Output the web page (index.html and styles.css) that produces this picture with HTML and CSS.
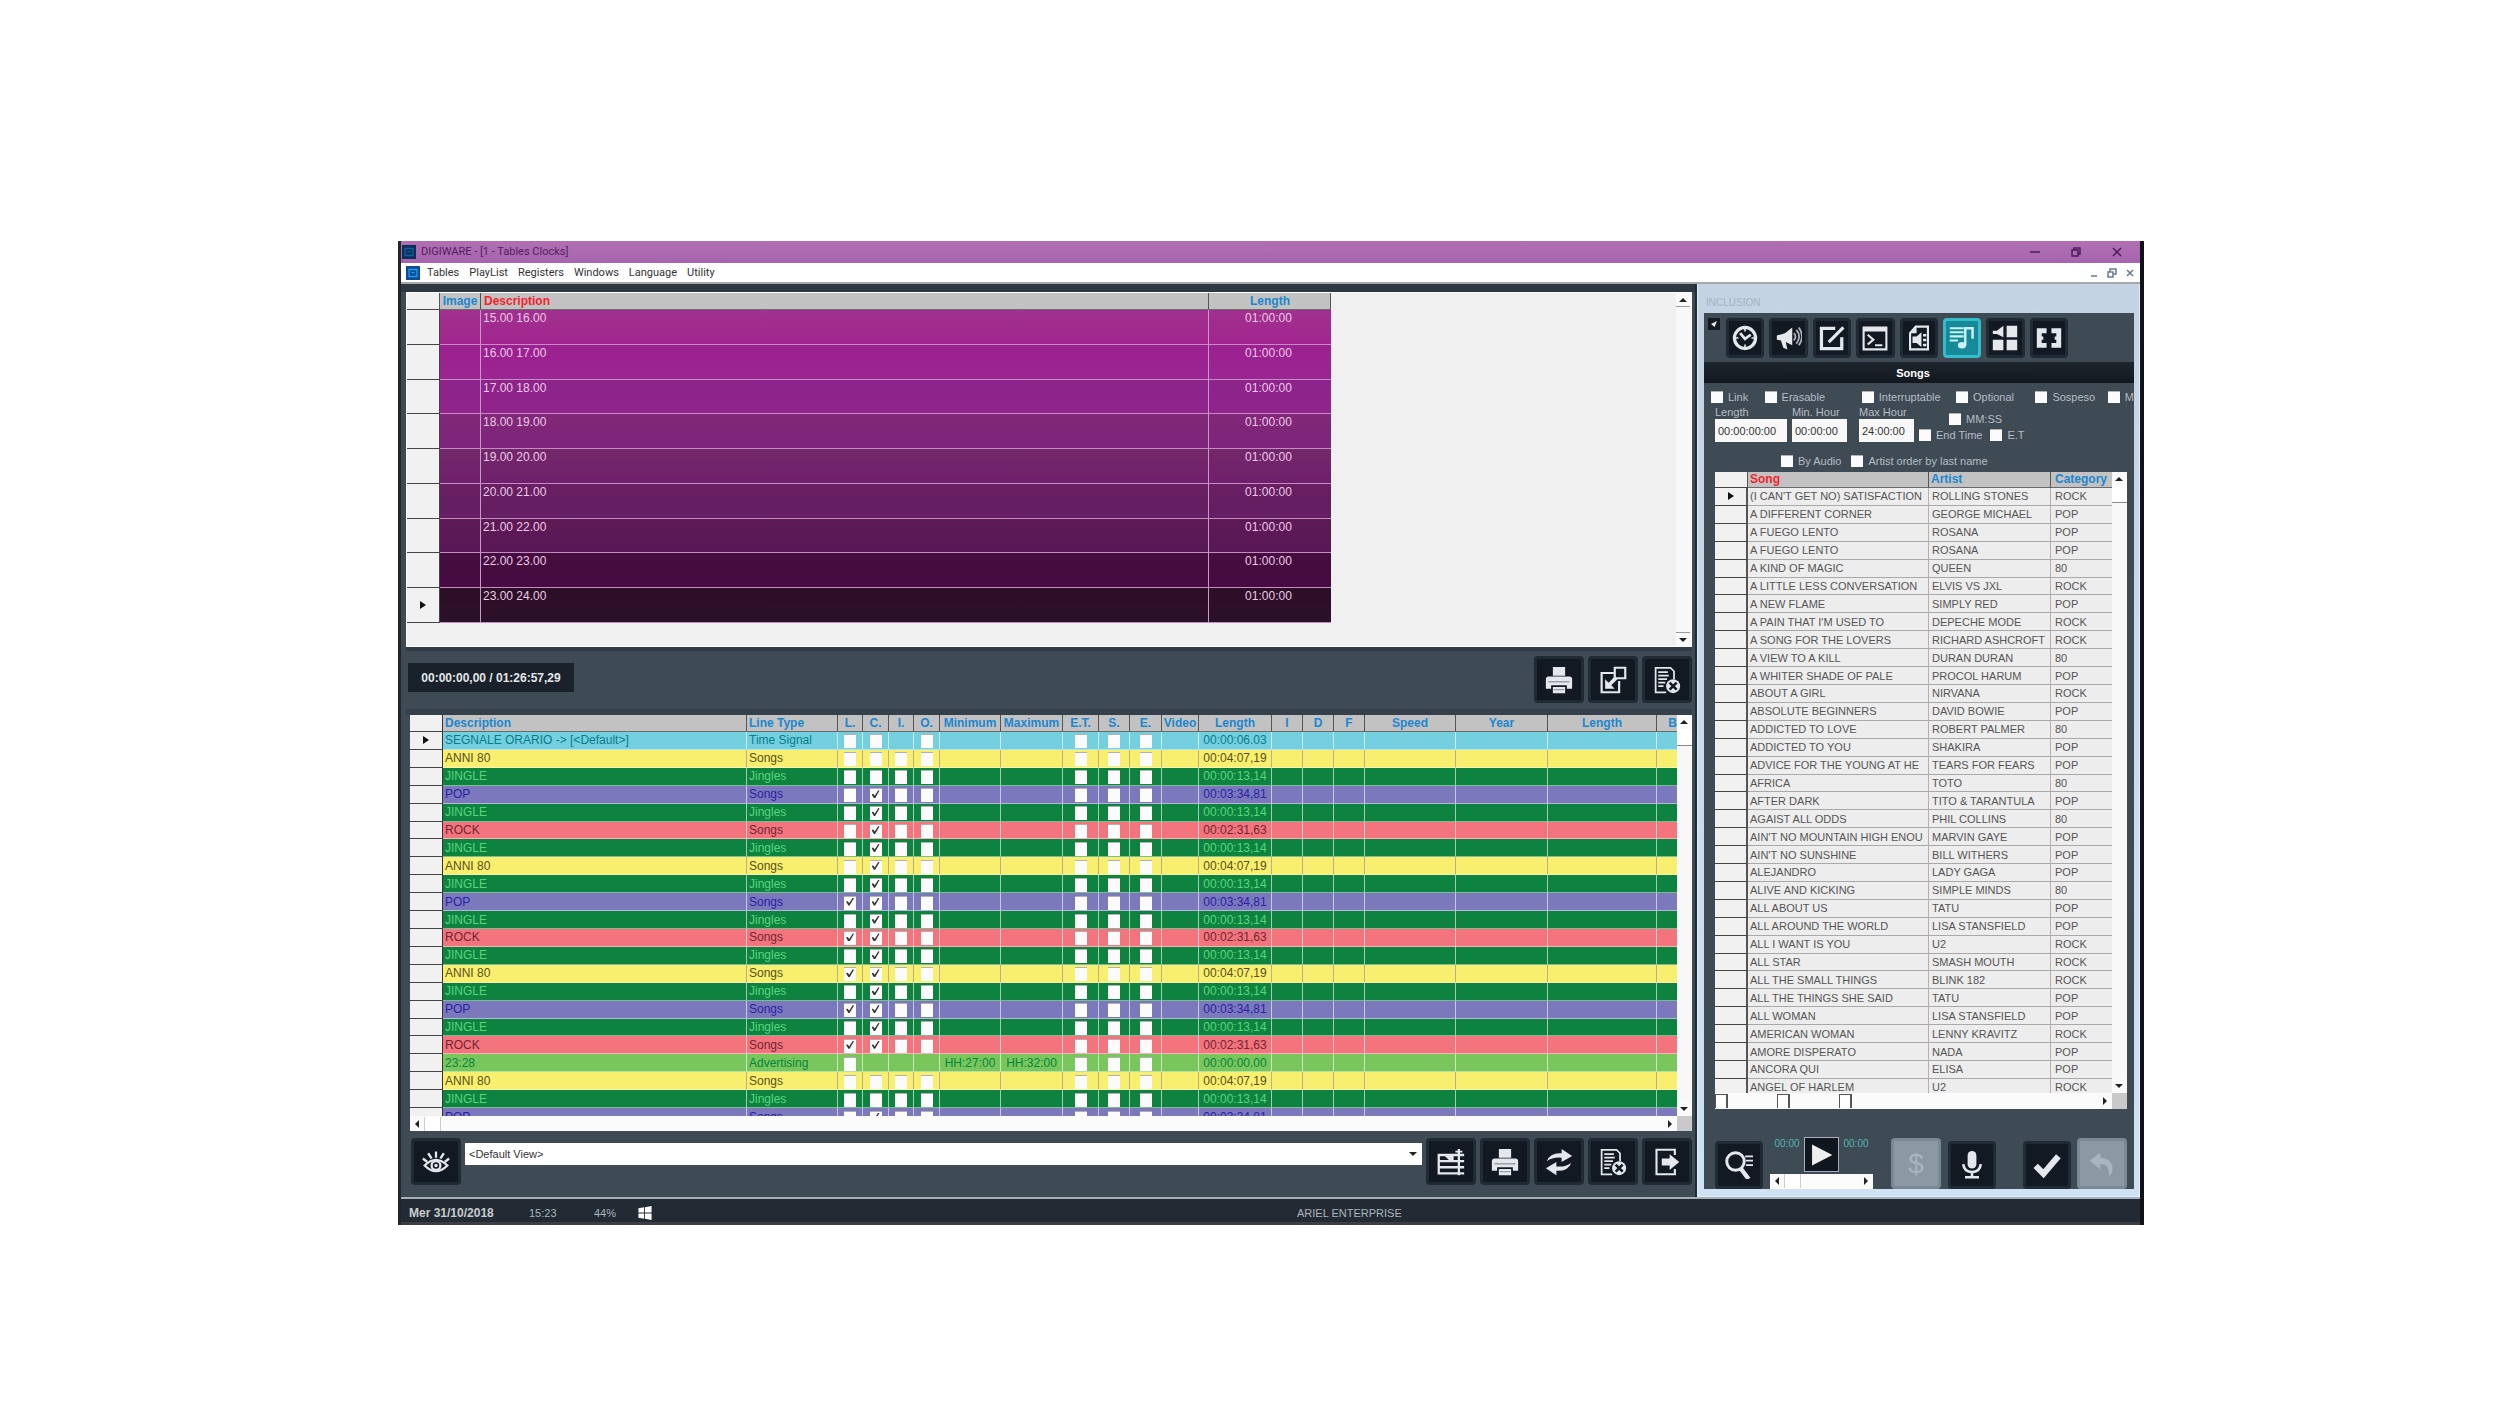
FILE: index.html
```html
<!DOCTYPE html>
<html lang="en">
<head>
<meta charset="utf-8">
<title>DIGIWARE - [1 - Tables Clocks]</title>
<link rel="stylesheet" href="styles.css">
</head>
<body>
<svg class="sprite" aria-hidden="true">
  <symbol id="i-print" viewBox="0 0 32 32"><path fill="currentColor" d="M9 1h14v10H9zM4 12h24q3 0 3 3v11h-6v-4H7v4H1V15q0-3 3-3zM9 24h14v7H9z"/><path stroke="#98a0a8" stroke-width="1.5" d="M4 18h24M10 27h12"/></symbol>
  <symbol id="i-expand" viewBox="0 0 32 32"><g fill="none" stroke="currentColor" stroke-width="2.5"><path d="M17 8H3v22h20V17"/><path d="M18 2h12v12H18z"/></g><path fill="currentColor" d="M7 26V15l4 4 7-7 3 3-7 7 4 4z"/></symbol>
  <symbol id="i-docx" viewBox="0 0 32 32"><path fill="none" stroke="currentColor" stroke-width="2" d="M15 30H3V2h17l4 4v9"/><path stroke="currentColor" stroke-width="1.8" d="M6 7h11M6 11h12M6 15h10M6 19h8M6 23h6"/><circle cx="23" cy="23" r="8" fill="currentColor"/><path stroke="#141b24" stroke-width="3" d="m19 19 8 8m0-8-8 8"/></symbol>
  <symbol id="i-eye" viewBox="0 0 32 32"><g fill="none" stroke="currentColor" stroke-width="2.6"><path d="M3 20q13-13 26 0-13 13-26 0z"/><circle cx="16" cy="20" r="5"/><path d="m1 12 5 4M7 6l4 6M16 4v7M25 6l-4 6M31 12l-5 4"/></g><circle cx="16" cy="20" r="2" fill="currentColor"/></symbol>
  <symbol id="i-rows" viewBox="0 0 32 32"><path fill="none" stroke="currentColor" stroke-width="2.6" d="M31 8H2v21h29M2 15h29M2 22h29M25 1v30"/><path fill="currentColor" d="m9 9 6 6h4V9zM21 3h8v2h-8z"/></symbol>
  <symbol id="i-sync" viewBox="0 0 32 32"><path fill="currentColor" d="M2 15Q6 5 19 6V1l12 8-12 7v-5Q9 10 2 15zM30 17q-4 10-17 9v5L1 23l12-7v5q10 1 17-4z"/></symbol>
  <symbol id="i-exit" viewBox="0 0 32 32"><path fill="none" stroke="currentColor" stroke-width="2.4" d="M25 8V2H4v28h21v-6"/><path fill="currentColor" d="M10 12h9V7l11 9-11 9v-5h-9z"/></symbol>
  <symbol id="i-clock" viewBox="0 0 32 32"><circle cx="16" cy="16" r="13" fill="none" stroke="currentColor" stroke-width="4"/><path fill="none" stroke="currentColor" stroke-width="3.4" d="m10 10 6 7 7-5"/><path stroke="currentColor" stroke-width="2" d="M16 4v4M16 24v4M4 16h4M24 16h4"/></symbol>
  <symbol id="i-horn" viewBox="0 0 32 32"><path fill="currentColor" d="M1 13 11 10 20 3v22l-8-4 2 9-5-2-3-9-5-1z"/><path fill="none" stroke="currentColor" stroke-width="2.2" d="M22 10q4 4 0 9M25 6q7 8 0 17M28 3q8 11 0 22" opacity=".75"/></symbol>
  <symbol id="i-edit" viewBox="0 0 32 32"><path fill="none" stroke="currentColor" stroke-width="4" d="M20 4H3v25h25V15"/><path stroke="currentColor" stroke-width="4" d="M12 21 30 3"/></symbol>
  <symbol id="i-term" viewBox="0 0 32 32"><path fill="none" stroke="currentColor" stroke-width="2.6" d="M2 3h28v27H2z"/><path fill="currentColor" d="M2 3h28v5H2z"/><path fill="none" stroke="currentColor" stroke-width="2.6" d="m7 12 7 6-7 6M16 25h9"/></symbol>
  <symbol id="i-file" viewBox="0 0 32 32"><path fill="none" stroke="currentColor" stroke-width="2.6" d="M12 2h15v28H5V10z"/><path fill="currentColor" d="M5 10 13 2v8zM8 14h5l6-5v18l-6-5H8zM21 11h4v3h-4zM21 17h4v3h-4zM21 23h4v3h-4z"/></symbol>
  <symbol id="i-music" viewBox="0 0 32 32"><path stroke="currentColor" stroke-width="2.6" d="M1 4h17M1 9h17M1 14h17M1 19h10"/><path fill="none" stroke="currentColor" stroke-width="3" d="M20 25V4h9v13"/><ellipse cx="16" cy="25" rx="5" ry="4" fill="currentColor"/></symbol>
  <symbol id="i-grid" viewBox="0 0 32 32"><path fill="currentColor" d="M1 7h5l8-6v14L6 11H1zM18 1h13v14H18zM1 18h13v13H1zM18 18h13v13H18z"/></symbol>
  <symbol id="i-link" viewBox="0 0 32 32"><path fill="none" stroke="currentColor" stroke-width="6" d="M13 7H4v18h9M19 7h9v18h-9"/><path stroke="currentColor" stroke-width="4" d="M6 16h3M23 16h3"/></symbol>
  <symbol id="i-find" viewBox="0 0 32 32"><circle cx="12" cy="12" r="10" fill="none" stroke="currentColor" stroke-width="3.4"/><path stroke="currentColor" stroke-width="5" d="m18 20 9 12"/><path stroke="currentColor" stroke-width="2" d="M23 6h9M24 11h8M24 16h8"/></symbol>
  <symbol id="i-mic" viewBox="0 0 32 32"><rect x="11" y="0" width="10" height="20" rx="5" fill="currentColor"/><path fill="none" stroke="currentColor" stroke-width="3" d="M6 15q1 9 10 9t10-9M16 24v5M8 30h16"/></symbol>
  <symbol id="i-check" viewBox="0 0 32 32"><path fill="none" stroke="currentColor" stroke-width="7" d="m3 17 9 9L29 6"/></symbol>
  <symbol id="i-undo" viewBox="0 0 32 32"><path fill="currentColor" d="M2 12 14 3v6q14 0 14 13 0 5-4 8 1-14-10-14v6z"/></symbol>
  <symbol id="i-play" viewBox="0 0 32 32"><path fill="currentColor" d="M5 3l25 13L5 29z"/></symbol>
  <symbol id="i-win" viewBox="0 0 32 32"><path fill="currentColor" d="m1 5 13-2v12H1zM16 3l15-3v15H16zM1 17h13v12L1 27zM16 17h15v15l-15-3z"/></symbol>
  <symbol id="i-app" viewBox="0 0 32 32"><path fill="#0a2f5c" d="M0 0h32v32H0z"/><path fill="none" stroke="#14609a" stroke-width="3" d="M7 8h18v16H7zM12 15h8"/></symbol>
</svg>

<div class="window">
  <header class="titlebar">
    <svg class="app-icon"><use href="#i-app"/></svg>
    <h1>DIGIWARE - [1 - Tables Clocks]</h1>
    <div class="winctl">
      <button aria-label="Minimize"><svg viewBox="0 0 10 10"><path d="M0 5h10"/></svg></button>
      <button aria-label="Restore"><svg viewBox="0 0 10 10"><path d="M1 3h6v6H1zM3 3V1h6v6H7"/></svg></button>
      <button aria-label="Close"><svg viewBox="0 0 10 10"><path d="m1 1 8 8m0-8-8 8"/></svg></button>
    </div>
  </header>
  <nav class="menubar">
    <svg class="app-icon light"><use href="#i-app"/></svg>
    <a href="#tables">Tables</a><a href="#playlist">PlayList</a><a href="#registers">Registers</a><a href="#windows">Windows</a><a href="#language">Language</a><a href="#utility">Utility</a>
    <div class="childctl">
      <button aria-label="Minimize child"><svg viewBox="0 0 10 10"><path d="M2 8h6"/></svg></button>
      <button aria-label="Restore child"><svg viewBox="0 0 10 10"><path d="M1 4h5v5H1zM3 4V1h6v5H6"/></svg></button>
      <button aria-label="Close child"><svg viewBox="0 0 10 10"><path d="m2 2 6 6m0-6-6 6"/></svg></button>
    </div>
  </nav>

  <main class="workspace">
    <div class="left">
      <section class="clock-panel">
        <table class="clocks">
          <thead><tr><th class="mark"></th><th class="c-image">Image</th><th class="sorted">Description</th><th class="c-len">Length</th></tr></thead>
          <tbody id="clocks"></tbody>
        </table>
        <div class="vbar"><button class="arw up" aria-label="Scroll up"></button><button class="arw down" aria-label="Scroll down"></button></div>
      </section>

      <div class="midbar">
        <output class="counter">00:00:00,00 / 01:26:57,29</output>
        <div class="tools">
          <button class="tool" aria-label="Print"><svg><use href="#i-print"/></svg></button>
          <button class="tool" aria-label="Expand"><svg><use href="#i-expand"/></svg></button>
          <button class="tool" aria-label="Delete list"><svg><use href="#i-docx"/></svg></button>
        </div>
      </div>

      <section class="grid-panel">
        <div class="grid-view">
          <table class="lines">
            <colgroup><col class="w33"><col><col class="w91"><col class="w25"><col class="w26"><col class="w25"><col class="w26"><col class="w61"><col class="w62"><col class="w36"><col class="w31"><col class="w32"><col class="w37"><col class="w73"><col class="w31"><col class="w31"><col class="w31"><col class="w91"><col class="w92"><col class="w109"><col class="w20"></colgroup>
            <thead><tr><th class="mark"></th><th class="l">Description</th><th class="l">Line Type</th><th>L.</th><th>C.</th><th>I.</th><th>O.</th><th>Minimum</th><th>Maximum</th><th>E.T.</th><th>S.</th><th>E.</th><th>Video</th><th>Length</th><th>I</th><th>D</th><th>F</th><th>Speed</th><th>Year</th><th>Length</th><th class="cut">B</th></tr></thead>
            <tbody id="lines"></tbody>
          </table>
        </div>
        <div class="vbar"><button class="arw up" aria-label="Scroll up"></button><div class="thumb"></div><button class="arw down" aria-label="Scroll down"></button></div>
        <div class="hbar"><button class="arw left-a" aria-label="Scroll left"></button><div class="hthumb"></div><button class="arw right-a" aria-label="Scroll right"></button></div>
        <div class="corner"></div>
      </section>

      <div class="viewbar">
        <button class="tool" aria-label="Show view"><svg><use href="#i-eye"/></svg></button>
        <label class="view"><select aria-label="View"><option>&lt;Default View&gt;</option></select></label>
        <div class="tools">
          <button class="tool" aria-label="Insert row"><svg><use href="#i-rows"/></svg></button>
          <button class="tool" aria-label="Print list"><svg><use href="#i-print"/></svg></button>
          <button class="tool" aria-label="Refresh"><svg><use href="#i-sync"/></svg></button>
          <button class="tool" aria-label="Clear list"><svg><use href="#i-docx"/></svg></button>
          <button class="tool" aria-label="Exit"><svg><use href="#i-exit"/></svg></button>
        </div>
      </div>
    </div>

    <aside class="inclusion">
      <h2>INCLUSION</h2>
      <div class="inner">
        <div class="kinds">
          <button class="pin" aria-label="Pin"></button>
          <div class="kind-list">
            <button class="tool" aria-label="Time signal"><svg><use href="#i-clock"/></svg></button>
            <button class="tool" aria-label="Advertising"><svg><use href="#i-horn"/></svg></button>
            <button class="tool" aria-label="Notes"><svg><use href="#i-edit"/></svg></button>
            <button class="tool" aria-label="Command"><svg><use href="#i-term"/></svg></button>
            <button class="tool" aria-label="Audio file"><svg><use href="#i-file"/></svg></button>
            <button class="tool active" aria-label="Songs"><svg><use href="#i-music"/></svg></button>
            <button class="tool" aria-label="Jingles"><svg><use href="#i-grid"/></svg></button>
            <button class="tool" aria-label="Linked"><svg><use href="#i-link"/></svg></button>
          </div>
        </div>
        <h3>Songs</h3>
        <form class="opts">
          <div class="flags">
            <label><input type="checkbox">Link</label><label><input type="checkbox">Erasable</label><label><input type="checkbox">Interruptable</label><label><input type="checkbox">Optional</label><label><input type="checkbox">Sospeso</label><label><input type="checkbox">M</label>
          </div>
          <div class="times">
            <label class="f-len">Length<input type="text" value="00:00:00:00"></label>
            <label class="f-min">Min. Hour<input type="text" value="00:00:00"></label>
            <label class="f-max">Max Hour<input type="text" value="24:00:00"></label>
            <div class="ends">
              <label class="mmss"><input type="checkbox">MM:SS</label>
              <div class="pair"><label><input type="checkbox">End Time</label><label><input type="checkbox">E.T</label></div>
            </div>
          </div>
          <div class="sorts"><label><input type="checkbox">By Audio</label><label><input type="checkbox">Artist order by last name</label></div>
        </form>
        <section class="song-panel">
          <div class="song-view">
            <table class="songs">
              <thead><tr><th class="mark"></th><th class="c-song sorted">Song</th><th class="c-artist">Artist</th><th>Category</th></tr></thead>
              <tbody id="songs"></tbody>
            </table>
          </div>
          <div class="vbar"><button class="arw up" aria-label="Scroll up"></button><div class="thumb"></div><button class="arw down" aria-label="Scroll down"></button></div>
          <div class="hbar ticks"><i></i><i></i><i></i><button class="arw right-a" aria-label="Scroll right"></button></div>
          <div class="corner"></div>
        </section>
        <div class="player">
          <button class="tool" aria-label="Search"><svg><use href="#i-find"/></svg></button>
          <div class="deck">
            <span>00:00</span><button class="play" aria-label="Play"><svg><use href="#i-play"/></svg></button><span>00:00</span>
            <div class="seek"><button class="arw left-a" aria-label="Back"></button><div class="hthumb"></div><button class="arw right-a" aria-label="Forward"></button></div>
          </div>
          <button class="tool off dollar" disabled>$</button>
          <button class="tool" aria-label="Record"><svg><use href="#i-mic"/></svg></button>
          <button class="tool ok" aria-label="Confirm"><svg><use href="#i-check"/></svg></button>
          <button class="tool off" disabled aria-label="Undo"><svg><use href="#i-undo"/></svg></button>
        </div>
      </div>
    </aside>
  </main>

  <footer class="status">
    <b>Mer 31/10/2018</b><span>15:23</span><span>44%</span><svg><use href="#i-win"/></svg><span>ARIEL ENTERPRISE</span>
  </footer>
</div>
<script src="app.js"></script>
</body>
</html>
```
FILE: styles.css
```css
* { box-sizing: border-box; }
body {
  margin: 0;
  padding: 241px 356px 180px 398px;
  background: #fff;
  font: 11px/16px "Liberation Sans", Arial, sans-serif;
}
h1, h2, h3 { margin: 0; font-size: 11px; font-weight: 400; }
button { margin: 0; padding: 0; border: 0; background: none; font: inherit; }
table { border-collapse: separate; border-spacing: 0; table-layout: fixed; width: 100%; }
th, td { padding: 0; overflow: hidden; white-space: nowrap; line-height: 16px; }
.sprite { position: absolute; width: 0; height: 0; }

.window { border-left: 3px solid #23272d; border-right: 4px solid #0f1216; background: #3e4a54; }

/* title and menus */
.titlebar { display: flex; align-items: center; height: 22px; padding: 0 18px 0 1px; background: linear-gradient(#b26fb2, #a565ad); color: #54205f; }
.titlebar h1 { font-family: Roboto, sans-serif; margin-left: 5px; }
.app-icon { width: 14px; height: 14px; }
.app-icon.light { filter: brightness(1.6); margin-right: 7px; }
.winctl, .childctl { display: flex; margin-left: auto; }
.winctl { gap: 31px; }
.winctl svg, .childctl svg { display: block; width: 10px; height: 10px; fill: none; stroke: #4c1c58; stroke-width: 1.5; }
.childctl { gap: 8px; }
.childctl svg { stroke: #6a7a8c; }
.menubar { display: flex; align-items: center; height: 21px; padding: 0 5px; background: #fff; border-bottom: 2px solid #a5a9ab; font-family: Roboto, sans-serif; }
.menubar a { color: #333; text-decoration: none; margin-right: 10px; }

.workspace { display: grid; grid-template-columns: minmax(0, 1fr) 443px; border-bottom: 2px solid #a7b0b8; background: #2b3740; }
.left { padding: 8px 3px 0 5px; background: #3e4a54; border-right: 2px solid #222a32; border-top: 0; box-shadow: inset 0 8px #2c3943; }

/* tables */
th { height: 17px; background: #c2c2c2; color: #1b87cf; font-size: 12px; font-weight: 700; border-right: 1px solid #555; border-bottom: 1px solid #6b6b6b; }
th.sorted { color: #f5222d; text-align: left; padding-left: 3px; }
th.l { text-align: left; padding-left: 2px; }
.mark { background: #f1f1f1; border-right: 1px solid #555; border-bottom: 1px solid #444; text-align: center; }
.mark.now::after { content: ""; display: inline-block; border-left: 6px solid #111; border-top: 4px solid transparent; border-bottom: 4px solid transparent; }
.arw { display: grid; place-items: center; width: 14px; height: 14px; background: #fafafa; flex: none; }
.arw::after { content: ""; border: 4px solid transparent; }
.up::after { border-bottom-color: #222; border-top: 0; }
.down::after { border-top-color: #222; border-bottom: 0; }
.left-a::after { border-right-color: #222; border-left: 0; }
.right-a::after { border-left-color: #222; border-right: 0; }
.vbar { display: flex; flex-direction: column; width: 15px; background: #f8f8f8; }
.vbar .down { margin-top: auto; }
.vbar .thumb { height: 17px; background: #fff; border-bottom: 1px solid #888; }
.hbar { display: flex; align-items: center; height: 15px; background: #fbfbfb; }
.hbar .right-a { margin-left: auto; }
.hthumb { width: 17px; height: 14px; background: #fff; border: 1px solid #ccc; border-width: 0 1px; }
.corner { background: #c9c9c9; }

/* clocks */
.clock-panel { display: flex; justify-content: space-between; height: 355px; background: #f0f0f0; border: 1px solid #fff; }
.clocks { width: 72%; height: 330px; font-size: 12px; color: #ecc9e6; }
.clocks .mark { width: 33px; }
.clocks .c-image { width: 41px; }
.clocks .c-len { width: 122px; }
.clocks td { vertical-align: top; border-right: 1px solid #c79ac6; border-bottom: 1px solid #c48cc2; padding-left: 2px; background: linear-gradient(var(--from), var(--to)); }
.clocks td:last-child { text-align: center; border-right: 0; padding: 0 4px 0 0; }
.clocks td.mark { vertical-align: middle; background: #f1f1f1; border-color: #444; padding: 0; }
.clock-panel .up { border-bottom: 1px solid #999; }
.clock-panel .down { border-top: 1px solid #999; }

/* button bars */
.midbar { display: flex; justify-content: space-between; align-items: flex-start; height: 68px; padding: 10px 0 0 2px; border-top: 4px solid #303c46; border-bottom: 6px solid #34404a; }
.counter { width: 166px; margin-top: 2px; padding: 8px 0 7px; background: #19212a; color: #e3e6e8; text-align: center; font-size: 12px; line-height: 14px; font-weight: 700; }
.tools { display: flex; gap: 4px; }
.midbar .tools { margin-top: -5px; }
.tool { display: grid; place-items: center; flex: none; width: 50px; height: 47px; border-radius: 4px; background: #121922; border: 3px solid #202a34; color: #e4e7ec; }
.tool svg { display: block; width: 28px; height: 28px; }

/* playlist lines */
.grid-panel { display: grid; grid-template: 401px 15px / minmax(0, 1fr) 15px; margin-left: 4px; }
.grid-view { overflow: hidden; }
.lines { height: 411px; font-size: 12px; }
.lines th.cut { text-align: right; border-right: 0; }
.lines td { height: 17px; text-align: center; border-right: 1px solid rgba(255,255,255,.6); border-bottom: 1px solid rgba(255,255,255,.45); }
.lines td:nth-child(2), .lines td:nth-child(3) { text-align: left; padding-left: 2px; }
.lines td:last-child { border-right: 0; }
.lines .mark, .lines td.mark { border-right: 1px solid #333; border-bottom: 1px solid #444; }
.signal { background: #74d0de; color: #087c8c; }
.anni { background: #f9ef6e; color: #574f1d; }
.jingle { background: #0e8340; color: #58d67c; }
.pop { background: #7b79bc; color: #2a1fa6; }
.rock { background: #f4747d; color: #6e2732; }
.advert { background: #79c65d; color: #078441; }
.anni td { border-right-color: #b9b18c; }
input[type=checkbox] { appearance: none; width: 12px; height: 12px; margin: 0; background: #fbfbfb; border: 0; border-top: 1px solid #b5b0b0; flex: none; }
.lines td input[type=checkbox] { display: block; height: 14px; margin: 2px auto 0; }
input[type=checkbox]:checked::before { content: ""; display: block; width: 8px; height: 8px; margin: 1px 2px; background: #333; clip-path: polygon(0 50%, 22% 45%, 40% 70%, 85% 0, 100% 5%, 45% 100%, 30% 100%); }
.w20 { width: 20px; } .w25 { width: 25px; } .w26 { width: 26px; } .w31 { width: 31px; } .w32 { width: 32px; }
.w33 { width: 33px; } .w36 { width: 36px; } .w37 { width: 37px; } .w61 { width: 61px; } .w62 { width: 62px; }
.w73 { width: 73px; } .w91 { width: 91px; } .w92 { width: 92px; } .w109 { width: 109px; }

.viewbar { display: flex; align-items: flex-start; gap: 4px; padding: 7px 0 10px 5px; }
.view { position: relative; flex: 1; margin-top: 5px; }
.view select { appearance: none; display: block; width: 100%; height: 22px; padding: 0 4px; border: 0; border-radius: 0; background: #fff; color: #333; font: inherit; }
.view::after { content: ""; position: absolute; right: 5px; top: 9px; border: 4px solid transparent; border-top-color: #222; border-bottom: 0; }

/* inclusion panel */
.inclusion { padding: 2px 5px 7px 6px; background: linear-gradient(#c3d3e4, #cfe2f4); border: 1px solid #dfeefa; border-top: 0; }
.inclusion h2 { height: 27px; padding: 9px 2px 0; line-height: 16px; color: #a3b2bf; font-size: 10px; }
.inner { background: #3e4a54; color: #b6bdc3; }
.kinds { display: flex; padding: 5px 66px 4px 4px; gap: 6px; }
.pin { flex: none; position: relative; width: 12px; height: 12px; background: #141a22; }
.pin::after { content: ""; display: block; width: 6px; height: 6px; margin: 3px; background: #e8e8e8; clip-path: polygon(0 50%, 100% 0, 60% 100%); }
.kind-list { flex: 1; display: grid; grid-template-columns: repeat(8, 1fr); gap: 5px; }
.kind-list .tool { width: auto; height: 40px; }
.kind-list .tool svg { width: 26px; height: 26px; }
.tool.active { background: #168a98; border-color: #35bccb; color: #c9f4f7; }
.inner h3 { height: 21px; padding-right: 12px; background: linear-gradient(#1d252d, #12181e); color: #fff; text-align: center; font-weight: 700; line-height: 23px; }
.opts { padding: 6px 0 0 7px; }
.opts label { white-space: nowrap; }
.flags, .sorts, .pair, .mmss { display: flex; }
.flags { height: 16px; overflow: hidden; }
.flags label, .sorts label, .pair label, .mmss { display: flex; align-items: center; gap: 5px; }
.flags label:nth-child(1) { width: 54px; }
.flags label:nth-child(2) { width: 98px; }
.flags label:nth-child(3) { width: 95px; }
.flags label:nth-child(4) { width: 80px; }
.flags label:nth-child(5) { width: 73px; }
.times { display: flex; padding-left: 4px; }
.times input[type=text] { display: block; width: 100%; height: 23px; padding: 0 3px; border: 0; background: #f8f8f8; color: #333; font: inherit; }
.times > label { line-height: 14px; }
.f-len { width: 72px; margin-right: 5px; }
.f-min { width: 55px; margin-right: 12px; }
.f-max { width: 55px; margin-right: 5px; }
.ends { padding-top: 6px; }
.mmss { padding-left: 30px; }
.pair { gap: 8px; }
.sorts { gap: 10px; padding: 9px 0 0 70px; height: 27px; }
.song-panel { display: grid; grid-template: 621px 16px / minmax(0, 1fr) 15px; margin: 2px 7px 0 11px; }
.song-view { overflow: hidden; background: #f0f0f0; }
.songs { height: 625px; color: #555; }
.songs .mark { width: 33px; background: #f1f1f1; }
.songs .c-song { width: 181px; }
.songs .c-artist { width: 122px; }
.songs th { text-align: left; padding-left: 2px; height: 16px; line-height: 15px; }
.songs td { padding-left: 3px; background: #ededed; border-right: 1px solid #b9aead; border-bottom: 1px solid #a9a9a9; }
.songs td:nth-child(2) { padding-left: 2px; }
.songs td.mark { padding: 0; border-right: 2px solid #555; border-bottom: 1px solid #444; }
.songs td:last-child, .songs th:last-child { border-right: 0; padding-left: 4px; }
.ticks { gap: 49px; height: 16px; }
.ticks i { width: 13px; height: 14px; background: #fff; border: 2px solid #555; border-width: 1px 2px 0 1px; }
.player { display: flex; align-items: flex-end; padding: 28px 7px 0 11px; }
.player .tool { width: 48px; height: 48px; }
.deck { display: grid; grid-template-columns: 1fr 35px 1fr; width: 103px; margin: 0 18px 0 7px; text-align: center; color: #4fb3b5; font-size: 10px; line-height: 14px; }
.play { width: 35px; height: 35px; background: #10161e; border: 1px solid #aab; color: #eee; }
.play svg { display: block; width: 26px; height: 26px; margin: 3px; }
.seek { grid-column: 1 / 4; display: flex; height: 15px; margin-top: 2px; background: #fcfcfc; }
.seek .right-a { margin-left: auto; }
.player .off { width: 50px; height: 51px; background: #8b99a5; border-color: #7b8995; color: #a9b5be; }
.player .dollar { font-size: 28px; margin-right: 7px; }
.player .ok { margin: 0 6px 0 auto; }

.status { display: grid; grid-template-columns: 120px 65px 44px 659px 1fr; align-items: center; height: 26px; padding: 4px 0 0 8px; background: #222b34; border-bottom: 3px solid #3d3e44; color: #aeb4b9; }
.status b { font-size: 12px; color: #c8cdd0; }
.status svg { width: 14px; height: 14px; color: #fff; }
```
FILE: app.js
```js
const el = (tag, cls, text) => {
  const n = document.createElement(tag);
  if (cls) n.className = cls;
  if (text) n.textContent = text;
  return n;
};

// Clock hours: label, gradient start, gradient end
const clocks = [
  ["15.00 16.00", "#a0318d", "#a2258f"], ["16.00 17.00", "#9c2090", "#9b2592"],
  ["17.00 18.00", "#8c248a", "#90248c"], ["18.00 19.00", "#812878", "#7e247c"],
  ["19.00 20.00", "#73286a", "#6f1f6c"], ["20.00 21.00", "#682062", "#651d63"],
  ["21.00 22.00", "#5d1a55", "#581757"], ["22.00 23.00", "#450d3e", "#460b42"],
  ["23.00 24.00", "#2c0f26", "#2a1029"]
];
const clockBody = document.getElementById("clocks");
clocks.forEach(([label, from, to], i) => {
  const tr = el("tr");
  tr.style.setProperty("--from", from);
  tr.style.setProperty("--to", to);
  tr.append(el("td", i === clocks.length - 1 ? "mark now" : "mark"), el("td"), el("td", "", label), el("td", "", "01:00:00"));
  clockBody.append(tr);
});

const kinds = {
  signal: ["SEGNALE ORARIO -> [<Default>]", "Time Signal", "00:00:06.03"],
  anni: ["ANNI 80", "Songs", "00:04:07,19"],
  jingle: ["JINGLE", "Jingles", "00:00:13,14"],
  pop: ["POP", "Songs", "00:03:34,81"],
  rock: ["ROCK", "Songs", "00:02:31,63"],
  advert: ["23:28", "Advertising", "00:00:00.00"]
};
// L, C, I, O boxes: 1 ticked, 0 clear, - absent
const lines = [
  ["signal", "00-0"], ["anni", "0000"], ["jingle", "0000"], ["pop", "0100"], ["jingle", "0100"],
  ["rock", "0100"], ["jingle", "0100"], ["anni", "0100"], ["jingle", "0100"], ["pop", "1100"],
  ["jingle", "0100"], ["rock", "1100"], ["jingle", "0100"], ["anni", "1100"], ["jingle", "0100"],
  ["pop", "1100"], ["jingle", "0100"], ["rock", "1100"], ["advert", "0---", "HH:27:00", "HH:32:00"],
  ["anni", "0000"], ["jingle", "0000"], ["pop", "0100"]
];
const boxCell = (state, label) => {
  const td = el("td");
  if (state !== "-") {
    const box = el("input");
    box.type = "checkbox";
    box.checked = state === "1";
    box.setAttribute("aria-label", label);
    td.append(box);
  }
  return td;
};
const lineBody = document.getElementById("lines");
lines.forEach(([kind, boxes, min, max], i) => {
  const [desc, type, len] = kinds[kind];
  const tr = el("tr", kind);
  tr.append(el("td", i ? "mark" : "mark now"), el("td", "", desc), el("td", "", type));
  [...boxes].forEach((s, k) => tr.append(boxCell(s, "LCIO"[k])));
  tr.append(el("td", "", min), el("td", "", max));
  ["E.T.", "S.", "E."].forEach(n => tr.append(boxCell("0", n)));
  tr.append(el("td"), el("td", "", len));
  for (let k = 0; k < 7; k++) tr.append(el("td"));
  lineBody.append(tr);
});

const songs = `(I CAN'T GET NO) SATISFACTION|ROLLING STONES|ROCK
A DIFFERENT CORNER|GEORGE MICHAEL|POP
A FUEGO LENTO|ROSANA|POP
A FUEGO LENTO|ROSANA|POP
A KIND OF MAGIC|QUEEN|80
A LITTLE LESS CONVERSATION|ELVIS VS JXL|ROCK
A NEW FLAME|SIMPLY RED|POP
A PAIN THAT I'M USED TO|DEPECHE MODE|ROCK
A SONG FOR THE LOVERS|RICHARD ASHCROFT|ROCK
A VIEW TO A KILL|DURAN DURAN|80
A WHITER SHADE OF PALE|PROCOL HARUM|POP
ABOUT A GIRL|NIRVANA|ROCK
ABSOLUTE BEGINNERS|DAVID BOWIE|POP
ADDICTED TO LOVE|ROBERT PALMER|80
ADDICTED TO YOU|SHAKIRA|POP
ADVICE FOR THE YOUNG AT HE|TEARS FOR FEARS|POP
AFRICA|TOTO|80
AFTER DARK|TITO & TARANTULA|POP
AGAIST ALL ODDS|PHIL COLLINS|80
AIN'T NO MOUNTAIN HIGH ENOU|MARVIN GAYE|POP
AIN'T NO SUNSHINE|BILL WITHERS|POP
ALEJANDRO|LADY GAGA|POP
ALIVE AND KICKING|SIMPLE MINDS|80
ALL ABOUT US|TATU|POP
ALL AROUND THE WORLD|LISA STANSFIELD|POP
ALL I WANT IS YOU|U2|ROCK
ALL STAR|SMASH MOUTH|ROCK
ALL THE SMALL THINGS|BLINK 182|ROCK
ALL THE THINGS SHE SAID|TATU|POP
ALL WOMAN|LISA STANSFIELD|POP
AMERICAN WOMAN|LENNY KRAVITZ|ROCK
AMORE DISPERATO|NADA|POP
ANCORA QUI|ELISA|POP
ANGEL OF HARLEM|U2|ROCK`.split("\n");
const songBody = document.getElementById("songs");
songs.forEach((row, i) => {
  const tr = el("tr");
  tr.append(el("td", i ? "mark" : "mark now"), ...row.split("|").map(t => el("td", "", t)));
  songBody.append(tr);
});
```
